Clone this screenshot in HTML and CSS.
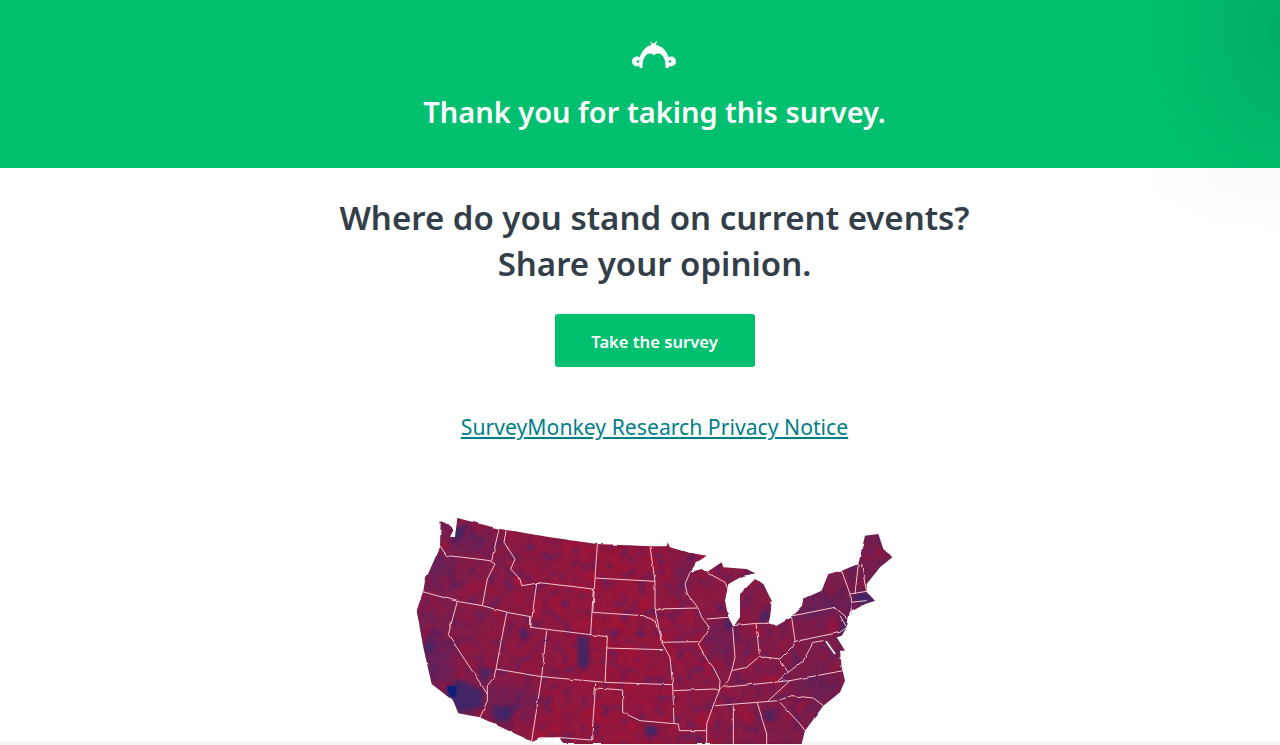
FILE: index.html
```html
<!DOCTYPE html>
<html lang="en">
<head>
<meta charset="utf-8">
<title>Thank you</title>
<link rel="stylesheet" href="styles.css">
</head>
<body>
<header class="banner">
  <svg class="logo" viewBox="0 0 45 30" aria-hidden="true">
    <path class="logo-fill" d="M8 17C10 10 14.500 6 19.500 5L18 1.500L21.500 3.800L25 .5L24 5C30 6 34.500 10.500 36.500 17L37 28L33.500 28C34 21 31.500 13.500 26 13.500C24 13.500 22.500 14.500 22 15.500C21.500 14.500 20 13.500 18 13.500C12.500 13.500 10 21 10.500 28L7.500 28Z"/>
    <circle class="logo-fill" cx="5" cy="21.500" r="5"/>
    <circle class="logo-fill" cx="39" cy="21.500" r="5"/>
    <circle class="logo-dot" cx="6" cy="21.500" r="1.300"/>
    <circle class="logo-dot" cx="38" cy="21.500" r="1.300"/>
  </svg>
  <h1 class="banner-title">Thank you for taking this survey.</h1>
</header>
<main class="content">
  <h2 class="pitch">Where do you stand on current events?<br>Share your opinion.</h2>
  <a class="cta" href="#">Take the survey</a>
  <a class="privacy" href="#">SurveyMonkey Research Privacy Notice</a>
  <svg class="map" viewBox="0 0 1530 720" aria-hidden="true">
    <defs>
      <clipPath id="usa">
        <path d="M122 52L150 62L160 78L150 98L165 100L172 42L300 75L450 100L590 120L750 127L800 127L803 115L810 130L860 145L920 155L890 175L870 205L905 195L920 205L965 175L970 190L1040 195L1065 208L1030 215L985 240L975 290L985 340L1000 368L1020 340L1020 270L1065 225L1090 240L1115 290L1110 340L1105 358L1130 365L1175 340L1205 310L1210 285L1265 260L1285 210L1330 198L1375 180L1395 95L1435 90L1450 135L1477 160L1440 190L1400 240L1400 265L1425 290L1395 300L1350 325L1345 345L1340 370L1325 395L1310 400L1335 440L1320 440L1325 490L1335 530L1320 565L1270 605L1215 680L1205 720L490 720L478 700L420 700L395 712L240 640L175 628L160 590L95 540L70 430L50 320L70 260L75 230L120 130Z"/>
      </clipPath>
      <linearGradient id="base" x1="0" y1="0" x2="1" y2="0">
        <stop offset="0" stop-color="#762050"/>
        <stop offset=".2" stop-color="#8a1b44"/>
        <stop offset=".42" stop-color="#98173a"/>
        <stop offset=".62" stop-color="#8a1b44"/>
        <stop offset="1" stop-color="#711f4f"/>
      </linearGradient>
      <filter id="soft" color-interpolation-filters="sRGB" x="-30%" y="-30%" width="160%" height="160%"><feGaussianBlur stdDeviation="18"/></filter>
      <filter id="softer" color-interpolation-filters="sRGB" x="-30%" y="-30%" width="160%" height="160%"><feGaussianBlur stdDeviation="6"/></filter>
      <filter id="mottle" color-interpolation-filters="sRGB" x="0" y="0" width="100%" height="100%">
        <feTurbulence type="fractalNoise" baseFrequency=".035" numOctaves="3" seed="7"/>
        <feColorMatrix type="matrix" values="0 0 0 0 .30  0 0 0 0 .13  0 0 0 0 .40  3 0 0 0 -1.500"/>
        <feGaussianBlur stdDeviation="3"/>
      </filter>
      <filter id="mottle-red" color-interpolation-filters="sRGB" x="0" y="0" width="100%" height="100%">
        <feTurbulence type="fractalNoise" baseFrequency=".018" numOctaves="2" seed="21"/>
        <feColorMatrix type="matrix" values="0 0 0 0 .72  0 0 0 0 .06  0 0 0 0 .18  0 3 0 0 -1.500"/>
        <feGaussianBlur stdDeviation="5"/>
      </filter>
      <filter id="wobble" color-interpolation-filters="sRGB" x="-2%" y="-2%" width="104%" height="104%">
        <feTurbulence type="fractalNoise" baseFrequency=".03" numOctaves="2" seed="3" result="n"/>
        <feDisplacementMap in="SourceGraphic" in2="n" scale="7" xChannelSelector="R" yChannelSelector="G"/>
        <feGaussianBlur stdDeviation="1"/>
      </filter>
    </defs>
    <g filter="url(#wobble)">
      <g clip-path="url(#usa)">
        <rect width="1530" height="720" fill="url(#base)"/>
        <rect class="noise-red" width="1530" height="720" filter="url(#mottle-red)"/>
        <rect class="noise" width="1530" height="720" filter="url(#mottle)"/>
        <g filter="url(#soft)" class="purples">
          <ellipse cx="110" cy="190" rx="50" ry="40"/>
          <ellipse cx="230" cy="120" rx="70" ry="30"/>
          <ellipse cx="110" cy="470" rx="50" ry="70"/>
          <ellipse cx="330" cy="590" rx="90" ry="50"/>
          <ellipse cx="1270" cy="310" rx="100" ry="40"/>
          <ellipse cx="960" cy="400" rx="50" ry="60"/>
          <ellipse cx="850" cy="220" rx="30" ry="60"/>
          <ellipse cx="1250" cy="550" rx="70" ry="30"/>
        </g>
        <g filter="url(#softer)" class="blues">
          <path d="M175 525L250 560L245 610L175 628L130 560Z"/>
          <path d="M285 610L340 610L330 655L280 650Z"/>
          <path d="M235 495L280 495L260 530Z"/>
          <path d="M80 410L100 420L90 450L75 440Z"/>
          <path d="M165 70L200 70L180 115L160 105Z"/>
          <path d="M530 395L570 400L560 500L535 490Z"/>
          <path d="M360 370L382 375L380 410L358 405Z"/>
          <path d="M735 665L770 665L770 698L735 698Z"/>
          <path d="M1365 265L1410 265L1420 295L1370 300Z"/>
          <path d="M1330 350L1345 355L1330 395L1310 385Z"/>
          <path d="M1085 320L1115 325L1100 355L1080 345Z"/>
          <path d="M975 345L995 350L995 380L978 375Z"/>
          <path d="M1095 620L1125 620L1115 650L1095 645Z"/>
        </g>
        <path class="darkest" d="M140 545L172 548L165 582L148 572Z"/>
      </g>
      <g class="borders">
        <polyline points="120,125 140,155 190,160 270,170 285,180 262,225 247,305"/>
        <polyline points="297,75 275,170"/>
        <polyline points="318,80 312,115 345,165 332,195 360,225 365,245 410,238"/>
        <polyline points="410,235 580,255 572,392 392,370 410,235"/>
        <polyline points="592,120 585,222 765,232"/>
        <polyline points="585,222 578,325 730,335 765,350 785,415 810,460 818,542"/>
        <polyline points="750,127 765,232 765,315 785,415"/>
        <polyline points="572,392 622,398 615,535"/>
        <polyline points="618,432 790,437"/>
        <polyline points="440,380 425,518"/>
        <polyline points="288,495 425,518 615,535 815,542"/>
        <polyline points="68,263 172,292 247,305 320,325 392,338 392,370"/>
        <polyline points="172,292 145,392 262,570 262,590 245,630 240,640"/>
        <polyline points="320,325 288,495 282,520 262,545 262,570"/>
        <polyline points="425,518 395,712"/>
        <polyline points="587,538 575,708 470,700"/>
        <polyline points="587,552 668,558 668,625 720,650 835,660 838,680 920,680"/>
        <polyline points="818,542 822,660"/>
        <polyline points="820,560 945,555 958,560 945,590 920,660 920,720"/>
        <polyline points="765,315 895,312"/>
        <polyline points="870,205 855,240 862,270 895,312 905,340 928,370 910,400 895,420 920,465 940,490 960,530 958,560"/>
        <polyline points="785,415 895,413"/>
        <polyline points="920,345 985,340"/>
        <polyline points="998,370 1005,460 995,500 985,530 958,560"/>
        <polyline points="1000,365 1070,358 1105,358"/>
        <polyline points="1068,360 1078,450"/>
        <polyline points="1175,340 1185,410"/>
        <polyline points="1180,335 1305,310 1345,345"/>
        <polyline points="1185,412 1320,385"/>
        <polyline points="920,205 975,235 985,260"/>
        <polyline points="995,500 1040,490 1075,460 1100,460 1140,465 1175,430 1185,410"/>
        <polyline points="970,550 1170,530 1330,500"/>
        <polyline points="1140,470 1165,505 1135,530"/>
        <polyline points="1165,505 1210,470 1240,415 1270,410"/>
        <polyline points="1170,530 1105,590"/>
        <polyline points="945,605 1135,590 1175,575 1240,582 1270,605"/>
        <polyline points="1140,595 1200,660 1215,680"/>
        <polyline points="1000,605 1000,720"/>
        <polyline points="1072,597 1100,690 1100,720"/>
        <polyline points="1325,200 1350,270 1355,335"/>
        <polyline points="1375,180 1365,270"/>
        <polyline points="1385,180 1395,240 1400,262 1350,270"/>
        <polyline points="1350,295 1400,290"/>
        <polyline points="1320,335 1340,370 1320,385"/>
      </g>
      <g class="water">
        <polyline points="1352,345 1392,328"/>
        <polyline points="1278,412 1305,450"/>
      </g>
    </g>
  </svg>
</main>
<div class="bottom-fade"></div>
</body>
</html>
```
FILE: styles.css
```css
* { box-sizing: border-box; }
html, body { margin: 0; height: 745px; overflow: hidden; background: #fff; }
body { position: relative; font-family: "Noto Sans", "Liberation Sans", sans-serif; }
.banner {
  height: 168px;
  padding: 40px 0 0 29px;
  display: flex;
  flex-direction: column;
  align-items: center;
  background: radial-gradient(ellipse 130px 190px at 100% 30px, rgba(0,0,0,.09), rgba(0,0,0,0)), #00bf6f;
  color: #fff;
}
.logo { width: 45px; height: 30px; display: block; }
.logo-fill { fill: #fff; }
.logo-dot { fill: #00bf6f; }
.banner-title { margin: 20px 0 0; font-size: 29px; line-height: 44px; font-weight: 600; }
.content {
  padding: 27px 0 0 29px;
  display: flex;
  flex-direction: column;
  align-items: center;
  background: radial-gradient(ellipse 150px 70px at 100% 0, rgba(0,0,0,.02), rgba(0,0,0,0)) no-repeat;
}
.pitch { margin: 0; font-size: 33px; line-height: 46px; font-weight: 600; color: #333e48; text-align: center; }
.cta {
  margin-top: 27px;
  width: 200px;
  height: 53px;
  padding-top: 1px;
  display: flex;
  align-items: center;
  justify-content: center;
  border-radius: 3px;
  background: #00bf6f;
  color: #fff;
  font-size: 16.6px;
  font-weight: 600;
  text-decoration: none;
}
.privacy { margin-top: 44px; font-size: 21.2px; line-height: 32px; color: #007f88; }
.map { display: block; margin-top: 61px; width: 510px; height: 240px; flex: none; }
.noise { opacity: .7; }
.noise-red { opacity: .55; }
.purples { fill: #3d2a72; opacity: .28; }
.blues { fill: #2a2a72; opacity: .7; }
.darkest { fill: #0b1f78; }
.borders polyline { fill: none; stroke: #f5c4cc; stroke-width: 3; stroke-linejoin: round; }
.water polyline { fill: none; stroke: #fff; stroke-width: 5; }
.bottom-fade { position: absolute; left: 0; right: 0; bottom: 0; height: 5px; background: linear-gradient(rgba(0,0,0,0), rgba(0,0,0,.06)); }
```
